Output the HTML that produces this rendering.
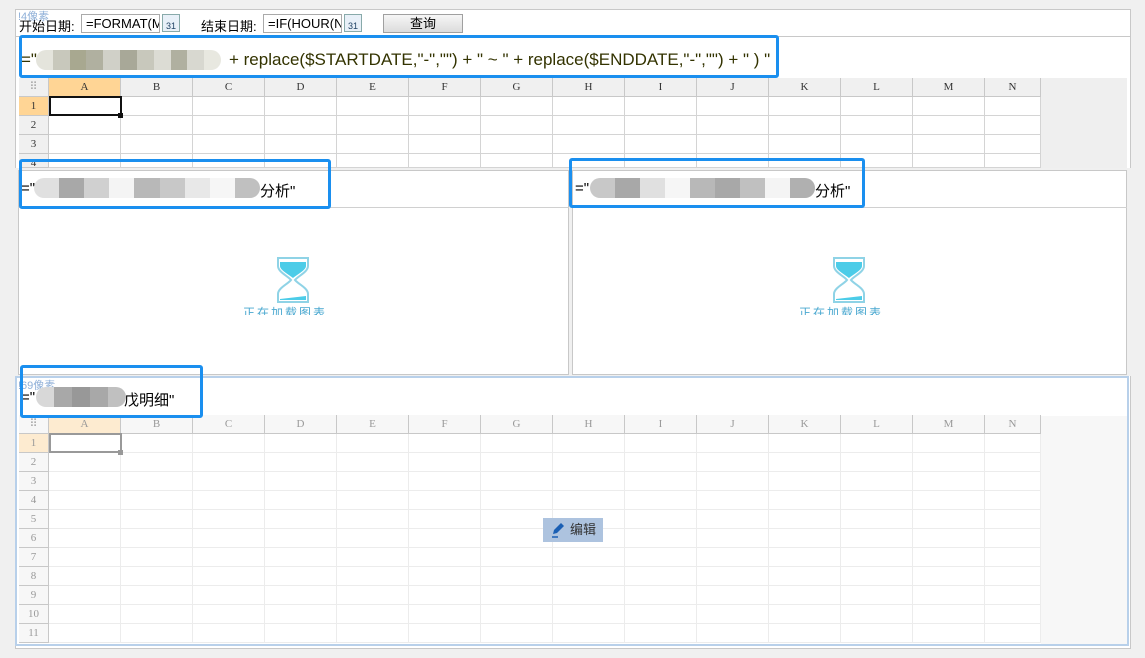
<!DOCTYPE html>
<html><head><meta charset="utf-8">
<style>
*{box-sizing:border-box;margin:0;padding:0}
body{width:1145px;height:658px;background:#f0f0f0;position:relative;overflow:hidden;font-family:"Liberation Sans","Noto Sans CJK SC",sans-serif;font-size:13px;color:#000}
.a{position:absolute;white-space:nowrap}
.hdr{position:absolute;background:#f0f0f0;border-right:1px solid #c8c8c8;border-bottom:1px solid #c8c8c8;text-align:center;font-family:"Liberation Serif",serif;font-size:11px;color:#333;line-height:18px}
.cell{position:absolute;border-right:1px solid #d8d8d8;border-bottom:1px solid #d8d8d8;background:#fff}
.blue{position:absolute;border:3px solid #1a8fef;border-radius:3px}
.blur{position:absolute;height:20px;border-radius:10px;overflow:hidden;display:flex}
.blur i{display:block;flex:1}
</style></head><body>
<div class="a" style="left:15px;top:9px;width:1116px;height:640px;background:#fff;border:1px solid #c8c8c8"></div>
<div class="a" style="left:15px;top:9px;width:1116px;height:28px;background:#fff;border:1px solid #c8c8c8"></div>
<div class="a" style="left:18px;top:8px;font-size:11px;color:#8fb0d8">!4像素</div>
<div class="a" style="left:19px;top:16px">开始日期:</div>
<div class="a" style="left:81px;top:14px;width:79px;height:19px;border:1px solid #aaa;background:#fff;padding-left:4px;line-height:17px;overflow:hidden">=FORMAT(MONTH</div>
<div class="a" style="left:162px;top:14px;width:18px;height:18px;border:1px solid #8aa;background:#e8f0f8;font-size:9px;text-align:center;line-height:22px;color:#246">31</div>
<div class="a" style="left:201px;top:16px">结束日期:</div>
<div class="a" style="left:263px;top:14px;width:79px;height:19px;border:1px solid #aaa;background:#fff;padding-left:4px;line-height:17px;overflow:hidden">=IF(HOUR(NOW</div>
<div class="a" style="left:344px;top:14px;width:18px;height:18px;border:1px solid #8aa;background:#e8f0f8;font-size:9px;text-align:center;line-height:22px;color:#246">31</div>
<div class="a" style="left:383px;top:14px;width:80px;height:19px;border:1px solid #a0a0a0;background:linear-gradient(#f6f6f6,#dcdcdc);text-align:center;line-height:17px">查询</div>
<div class="a" style="left:21px;top:50px;font-size:17px;color:#333300">="</div>
<div class="a" style="left:229px;top:50px;font-size:17px;color:#333300">+ replace($STARTDATE,"-","") + " ~ " + replace($ENDDATE,"-","") + " ) "</div>
<div class="blur" style="left:36px;top:50px;width:185px"><i style="background:#e4e4dc"></i><i style="background:#c8c8bc"></i><i style="background:#a8a890"></i><i style="background:#b0b0a0"></i><i style="background:#d0d0c8"></i><i style="background:#a8a898"></i><i style="background:#c8c8bc"></i><i style="background:#dcdcd4"></i><i style="background:#b0b0a0"></i><i style="background:#d8d8d0"></i><i style="background:#e8e8e0"></i></div>
<div id="g1"></div>
<div class="a" style="left:1041px;top:78px;width:86px;height:90px;background:#efefef"></div>
<div class="a" style="left:15px;top:168px;width:1116px;height:208px;background:#f0f0f0"></div>
<div class="a" style="left:18px;top:170px;width:551px;height:205px;background:#fff;border:1px solid #c8c8c8"></div>
<div class="a" style="left:18px;top:207px;width:551px;height:1px;background:#d0d0d0"></div>
<div class="a" style="left:572px;top:170px;width:555px;height:205px;background:#fff;border:1px solid #c8c8c8"></div>
<div class="a" style="left:572px;top:207px;width:555px;height:1px;background:#d0d0d0"></div>
<div class="a" style="left:21px;top:180px;font-size:15px">="</div>
<div class="a" style="left:260px;top:180px;font-size:15px">分析"</div>
<div class="blur" style="left:34px;top:178px;width:226px"><i style="background:#e0e0e0"></i><i style="background:#a8a8a8"></i><i style="background:#d0d0d0"></i><i style="background:#f4f4f4"></i><i style="background:#b8b8b8"></i><i style="background:#c8c8c8"></i><i style="background:#e8e8e8"></i><i style="background:#f6f6f6"></i><i style="background:#c0c0c0"></i></div>
<div class="a" style="left:575px;top:180px;font-size:15px">="</div>
<div class="a" style="left:815px;top:180px;font-size:15px">分析"</div>
<div class="blur" style="left:590px;top:178px;width:225px"><i style="background:#c8c8c8"></i><i style="background:#a8a8a8"></i><i style="background:#e0e0e0"></i><i style="background:#f6f6f6"></i><i style="background:#b8b8b8"></i><i style="background:#a8a8a8"></i><i style="background:#c0c0c0"></i><i style="background:#f4f4f4"></i><i style="background:#b0b0b0"></i></div>
<svg class="a" style="left:275px;top:256px" width="36" height="48" viewBox="0 0 36 48"><path d="M3 2h30v8c0 6-10 10-13 14 3 4 13 8 13 14v8H3v-8c0-6 10-10 13-14C13 20 3 16 3 10z" fill="none" stroke="#8fd3e6" stroke-width="2"/><path d="M5 6h26v4c0 4-8 8-13 12C13 18 5 14 5 10z" fill="#4ccce8"/><path d="M5 44h26v-4L5 43z" fill="#4ccce8"/></svg>
<div class="a" style="left:243px;top:306px;font-size:12px;color:#4aa8d0;letter-spacing:2px;height:9px;overflow:hidden;line-height:14px">正在加载图表</div>
<svg class="a" style="left:831px;top:256px" width="36" height="48" viewBox="0 0 36 48"><path d="M3 2h30v8c0 6-10 10-13 14 3 4 13 8 13 14v8H3v-8c0-6 10-10 13-14C13 20 3 16 3 10z" fill="none" stroke="#8fd3e6" stroke-width="2"/><path d="M5 6h26v4c0 4-8 8-13 12C13 18 5 14 5 10z" fill="#4ccce8"/><path d="M5 44h26v-4L5 43z" fill="#4ccce8"/></svg>
<div class="a" style="left:799px;top:306px;font-size:12px;color:#4aa8d0;letter-spacing:2px;height:9px;overflow:hidden;line-height:14px">正在加载图表</div>
<div class="a" style="left:15px;top:376px;width:1114px;height:270px;background:#fff;border:2px solid #b8d0ea"></div>
<div class="a" style="left:18px;top:377px;font-size:11px;color:#8fb0d8">!69像素</div>
<div class="a" style="left:21px;top:389px;font-size:15px">="</div>
<div class="a" style="left:124px;top:389px;font-size:15px">戊明细"</div>
<div class="blur" style="left:36px;top:387px;width:90px"><i style="background:#d8d8d8"></i><i style="background:#a8a8a8"></i><i style="background:#989898"></i><i style="background:#a8a8a8"></i><i style="background:#c0c0c0"></i></div>
<div id="g2"></div>
<div class="a" style="left:1041px;top:416px;width:86px;height:228px;background:#f7f7f7"></div>
<div class="a" style="left:543px;top:518px;width:60px;height:24px;background:#adc3df;font-size:13px;color:#333;line-height:24px;padding-left:27px">编辑</div>
<svg class="a" style="left:550px;top:522px" width="16" height="16" viewBox="0 0 16 16"><path d="M3 12l1-4 7-7 3 3-7 7z" fill="#1a5fb4"/><path d="M2 15h6" stroke="#1a5fb4" stroke-width="1.5"/></svg>
<div class="blue" style="left:19px;top:35px;width:760px;height:43px"></div>
<div class="blue" style="left:19px;top:159px;width:312px;height:50px"></div>
<div class="blue" style="left:569px;top:158px;width:296px;height:50px"></div>
<div class="blue" style="left:20px;top:365px;width:183px;height:53px"></div>
<script>
function grid(id,top,rows,light,bottom){
 var h='',cols='ABCDEFGHIJKLMN',x0=49,w=72,hh=19,rh=19;
 var hc=light?'#f7f7f7':'#f0f0f0',tc=light?'#999':'#333';
 h+='<div class="hdr" style="left:19px;top:'+top+'px;width:30px;height:'+hh+'px;background:'+hc+';color:#aaa">⠿</div>';
 for(var c=0;c<14;c++){var wd=c==13?56:w;
  h+='<div class="hdr" style="left:'+(x0+c*w)+'px;top:'+top+'px;width:'+wd+'px;height:'+hh+'px;background:'+(c==0?(light?'#fdebd0':'#ffd595'):hc)+';color:'+tc+'">'+cols[c]+'</div>';}
 for(var r=0;r<rows;r++){var y=top+hh+r*rh;var ht=Math.min(rh,bottom-y);if(ht<=0)break;
  h+='<div class="hdr" style="left:19px;top:'+y+'px;width:30px;height:'+ht+'px;overflow:hidden;background:'+(r==0?(light?'#fdebd0':'#ffd595'):hc)+';color:'+tc+'">'+(r+1)+'</div>';
  for(var c=0;c<14;c++){var wd=c==13?56:w;
   h+='<div class="cell" style="left:'+(x0+c*w)+'px;top:'+y+'px;width:'+wd+'px;height:'+ht+'px;border-color:'+(light?'#ececec':'#d4d4d4')+'"></div>';}}
 var y1=top+hh;
 h+='<div class="a" style="left:49px;top:'+(y1-1)+'px;width:73px;height:20px;border:2px solid '+(light?'#999':'#111')+'"></div><div class="a" style="left:118px;top:'+(y1+16)+'px;width:5px;height:5px;background:'+(light?'#999':'#111')+'"></div>';
 document.getElementById(id).innerHTML=h;}
grid('g1',78,5,false,168);
grid('g2',415,11,true,644);
</script>
</body></html>
